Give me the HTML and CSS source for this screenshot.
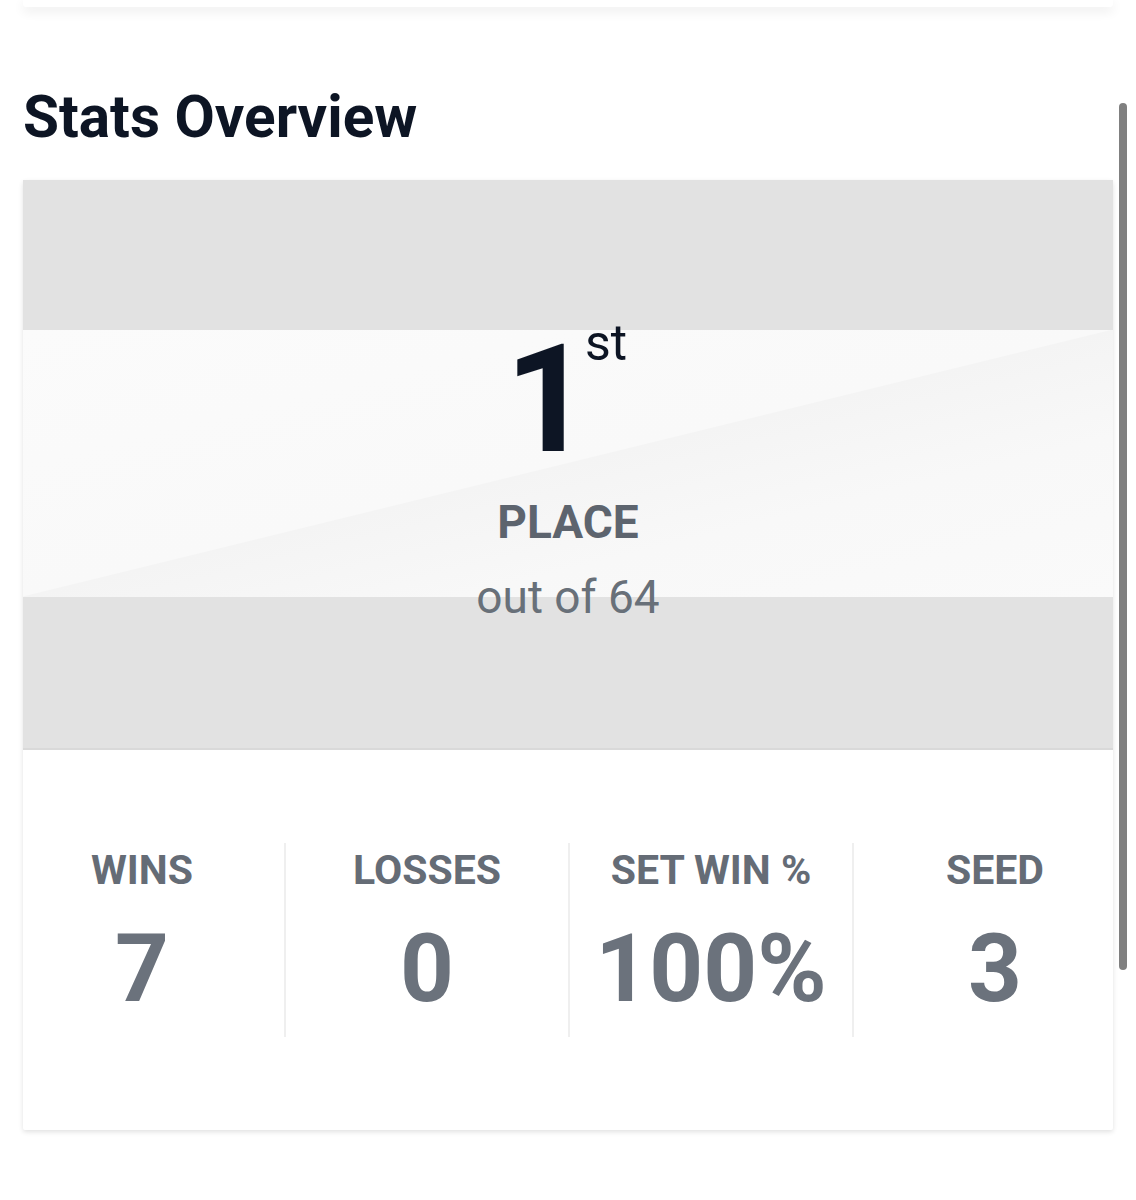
FILE: index.html
```html
<!DOCTYPE html>
<html lang="en">
<head>
<meta charset="utf-8">
<title>Stats Overview</title>
<link rel="stylesheet" href="styles.css">
</head>
<body>
<div class="top-card"></div>
<main class="page">
  <h1 class="title">Stats Overview</h1>
  <section class="card">
    <div class="hero">
      <div class="rank"><span class="rank-num">1</span><span class="rank-suffix">st</span></div>
      <div class="place">PLACE</div>
      <div class="out-of">out of 64</div>
    </div>
    <div class="stats">
      <div class="stat"><div class="stat-label">WINS</div><div class="stat-value">7</div></div>
      <div class="stat"><div class="stat-label">LOSSES</div><div class="stat-value">0</div></div>
      <div class="stat"><div class="stat-label">SET WIN %</div><div class="stat-value">100%</div></div>
      <div class="stat"><div class="stat-label">SEED</div><div class="stat-value">3</div></div>
    </div>
  </section>
</main>
<div class="scrollbar"></div>
</body>
</html>
```

FILE: styles.css
```css
* { box-sizing: border-box; }
html, body { margin: 0; padding: 0; }
body {
  background: #ffffff;
  font-family: Roboto, "Liberation Sans", Arial, sans-serif;
  width: 1136px;
  min-height: 1200px;
  overflow: hidden;
  position: relative;
}
.top-card {
  height: 7px;
  margin: 0 23px;
  background: #ffffff;
  box-shadow: 0 4px 12px rgba(0, 0, 0, 0.09);
  border-radius: 0 0 3px 3px;
}
.page { padding: 0 23px; }
.title {
  margin: 75px 0 28px 0;
  font-size: 58.5px;
  line-height: 70px;
  font-weight: 700;
  color: #0d1524;
  letter-spacing: 0;
}
.card {
  background: #ffffff;
  box-shadow: 0 2px 5px rgba(0, 0, 0, 0.12);
  border-radius: 2px;
}
.hero {
  height: 570px;
  padding-top: 153px;
  text-align: center;
  background-color: #e2e2e2;
  background-image: linear-gradient(to bottom right, #fbfbfb 0%, #f9f9f9 49.8%, #f4f4f4 50%, #f8f8f8 70%, #fafafa 100%);
  background-size: 100% 267px;
  background-position: 0 150px;
  background-repeat: no-repeat;
  border-bottom: 2px solid #d9d9d9;
}
.rank {
  line-height: 135px;
  height: 135px;
  color: #0d1524;
  padding-right: 4px;
}
.rank-num {
  font-size: 150px;
  font-weight: 700;
  letter-spacing: -8px;
}
.rank-suffix {
  font-size: 50px;
  font-weight: 400;
  line-height: 0;
  vertical-align: 91px;
  margin-left: 2px;
}
.place {
  margin-top: 27px;
  font-size: 46px;
  line-height: 55px;
  font-weight: 700;
  color: #5d646e;
}
.out-of {
  margin-top: 20px;
  font-size: 46px;
  line-height: 55px;
  font-weight: 400;
  color: #687079;
}
.stats {
  display: grid;
  grid-template-columns: repeat(4, 284px);
  margin-left: -23px;
  width: 1136px;
  padding: 93px 0 93px;
}
.stat {
  text-align: center;
  padding: 3px 0 16px;
}
.stat + .stat { border-left: 2px solid #efefef; }
.stat-label {
  font-size: 41px;
  line-height: 48px;
  font-weight: 700;
  color: #656c76;
}
.stat-value {
  margin-top: 24px;
  font-size: 94px;
  line-height: 103px;
  font-weight: 700;
  color: #6b727c;
}
.scrollbar {
  position: absolute;
  left: 1119px;
  top: 103px;
  width: 8px;
  height: 867px;
  border-radius: 4px;
  background: #808080;
}
```
